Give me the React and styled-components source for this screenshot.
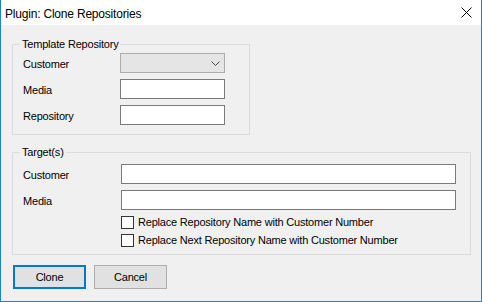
import React from "react";
import styled, { createGlobalStyle } from "styled-components";

const Global = createGlobalStyle`
  html, body { margin: 0; padding: 0; background: #f0f0f0; }
  * { box-sizing: border-box; }
`;

const FONT = `"Segoe UI", "Liberation Sans", Arial, sans-serif`;

const Window = styled.div`
  width: 482px;
  height: 302px;
  display: flex;
  flex-direction: column;
  border: 1px solid #1883d7;
  border-top: none;
  font-family: ${FONT};
  font-size: 11px;
  letter-spacing: -0.2px;
  color: #000;
  background: #f0f0f0;
`;

const TitleBar = styled.div`
  height: 25px;
  background: #fff;
  display: flex;
  align-items: center;
  justify-content: space-between;
  padding: 0 9px 0 4px;
`;

const Title = styled.span`
  font-size: 12px;
  letter-spacing: -0.2px;
  line-height: 16px;
  margin-top: 2px;
`;

const Body = styled.div`
  flex: 1;
  display: flex;
  flex-direction: column;
  padding: 19px 11px 0 11px;
`;

const GroupBox = styled.div`
  position: relative;
  border: 1px solid #dcdcdc;
  width: ${(p) => p.$width}px;
  padding: ${(p) => p.$pad};
  margin-bottom: ${(p) => p.$mb}px;
`;

const Legend = styled.span`
  position: absolute;
  top: -9px;
  left: 7px;
  padding: 0 2px;
  background: #f0f0f0;
  line-height: 16px;
`;

const FormGrid = styled.div`
  display: grid;
  grid-template-columns: ${(p) => p.$cols};
  row-gap: 6px;
  align-items: center;
`;

const Label = styled.span`
  line-height: 16px;
  padding-top: 2px;
`;

const TextBox = styled.div`
  height: 20px;
  border: 1px solid #7a7a7a;
  background: #fff;
`;

const Combo = styled.div`
  height: 20px;
  border: 1px solid #adadad;
  background: #e5e5e5;
  display: flex;
  align-items: center;
  justify-content: flex-end;
  padding-right: 4px;
`;

const CheckRow = styled.label`
  grid-column: 2;
  display: flex;
  align-items: center;
  gap: 4px;
  height: 13px;
  line-height: 13px;
  margin-top: ${(p) => p.$mt || 0}px;
`;

const CheckBox = styled.span`
  width: 13px;
  height: 13px;
  border: 1px solid #333;
  background: #fff;
  flex: none;
`;

const ButtonRow = styled.div`
  display: flex;
  gap: 8px;
  padding-left: 1px;
`;

const Button = styled.div`
  width: 73px;
  height: 24px;
  display: flex;
  align-items: center;
  justify-content: center;
  background: #e1e1e1;
  border: ${(p) => (p.$default ? "2px solid #0078d7" : "1px solid #adadad")};
`;

export default function App() {
  return (
    <>
      <Global />
      <Window>
        <TitleBar>
          <Title>Plugin: Clone Repositories</Title>
          <svg width="11" height="11" viewBox="0 0 11 11">
            <path d="M0.5 0.5 L10.5 10.5 M10.5 0.5 L0.5 10.5" stroke="#000" strokeWidth="1" />
          </svg>
        </TitleBar>
        <Body>
          <GroupBox $width={238} $pad="8px 0 9px 10px" $mb={17}>
            <Legend>Template Repository</Legend>
            <FormGrid $cols="97px 105px">
              <Label>Customer</Label>
              <Combo>
                <svg width="9" height="5" viewBox="0 0 9 5">
                  <path d="M0.5 0.5 L4.5 4.5 L8.5 0.5" stroke="#444" fill="none" strokeWidth="1" />
                </svg>
              </Combo>
              <Label>Media</Label>
              <TextBox />
              <Label>Repository</Label>
              <TextBox />
            </FormGrid>
          </GroupBox>
          <GroupBox $width={459} $pad="11px 0 7px 10px" $mb={10}>
            <Legend>Target(s)</Legend>
            <FormGrid $cols="98px 335px">
              <Label>Customer</Label>
              <TextBox />
              <Label>Media</Label>
              <TextBox />
              <CheckRow>
                <CheckBox />
                <span>Replace Repository Name with Customer Number</span>
              </CheckRow>
              <CheckRow $mt={-1}>
                <CheckBox />
                <span>Replace Next Repository Name with Customer Number</span>
              </CheckRow>
            </FormGrid>
          </GroupBox>
          <ButtonRow>
            <Button $default>Clone</Button>
            <Button>Cancel</Button>
          </ButtonRow>
        </Body>
      </Window>
    </>
  );
}
